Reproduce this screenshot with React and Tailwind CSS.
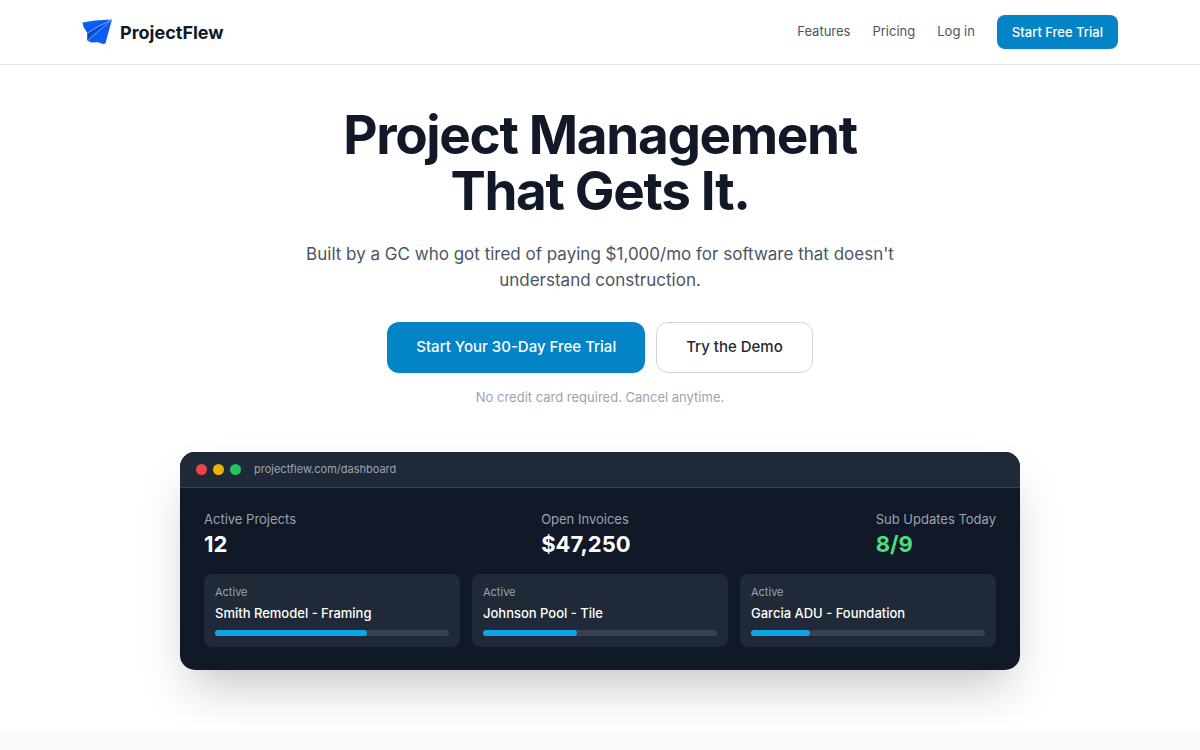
const projects = [
  { name: 'Smith Remodel - Framing', progress: 65 },
  { name: 'Johnson Pool - Tile', progress: 40 },
  { name: 'Garcia ADU - Foundation', progress: 25 },
];

const stats = [
  { label: 'Active Projects', value: '12', color: 'text-white' },
  { label: 'Open Invoices', value: '$47,250', color: 'text-white' },
  { label: 'Sub Updates Today', value: '8/9', color: 'text-[#4ade80]' },
];

function Logo() {
  return (
    <svg viewBox="0 0 30 26" className="h-[26px] w-[30px]" aria-hidden="true">
      <path d="M0.5 3.6 L13 1.4 L30 0.6 L23.4 24.4 L21 25 L16 23.2 L9 23.4 L5.4 21.6 L5.2 13.8 L1.6 8 Z" fill="#0a5cf5" />
      <path d="M29 1.4 L5.6 14.4 L5.4 21.4 L9.4 15.6 Z" fill="#0846c4" />
      <path d="M29.5 0.8 L15 8.2 L5.4 14.2" fill="none" stroke="#a3c3fb" strokeWidth="0.7" />
      <path d="M29.5 0.8 L12 16.2 L5.6 21.6" fill="none" stroke="#a3c3fb" strokeWidth="0.6" />
    </svg>
  );
}

function Header() {
  return (
    <header className="border-b border-gray-200">
      <div className="mx-auto flex h-16 max-w-[1080px] items-center justify-between px-[22px]">
        <a href="#" className="flex items-center gap-2 text-[18px] font-bold">
          <Logo />
          ProjectFlew
        </a>
        <nav className="flex items-center gap-[22px] text-[13px] text-[#4b5563]">
          <a href="#features">Features</a>
          <a href="#pricing">Pricing</a>
          <a href="#login">Log in</a>
          <a href="#trial" className="rounded-lg bg-[#0284c7] px-[15px] py-[7px] leading-5 font-medium text-white">
            Start Free Trial
          </a>
        </nav>
      </div>
    </header>
  );
}

function DashboardPreview() {
  return (
    <div className="mx-auto mt-[45px] max-w-[840px] overflow-hidden rounded-[15px] bg-[#111827] text-left shadow-2xl">
      <div className="flex h-9 items-center gap-[6px] border-b border-[#374151] bg-[#1f2937] px-4">
        <span className="size-[11px] rounded-full bg-[#ef4444]" />
        <span className="size-[11px] rounded-full bg-[#eab308]" />
        <span className="size-[11px] rounded-full bg-[#22c55e]" />
        <span className="ml-[7px] text-[11px] text-[#9ca3af]">projectflew.com/dashboard</span>
      </div>
      <div className="px-6 pt-[22px] pb-[23px]">
        <div className="flex justify-between">
          {stats.map((s) => (
            <div key={s.label}>
              <p className="text-[13px] leading-[19px] text-[#9ca3af]">{s.label}</p>
              <p className={`text-[22px] leading-[30px] font-bold ${s.color}`}>{s.value}</p>
            </div>
          ))}
        </div>
        <div className="mt-[15px] grid grid-cols-3 gap-3">
          {projects.map((p) => (
            <div key={p.name} className="rounded-lg bg-[#1f2937] p-[11px]">
              <p className="text-[11px] leading-[15px] text-[#9ca3af]">Active</p>
              <p className="mt-1 text-[13px] leading-[18px] font-medium text-white">{p.name}</p>
              <div className="mt-2 h-[6px] rounded-full bg-[#374151]">
                <div className="h-full rounded-full bg-[#0ea5e9]" style={{ width: `${p.progress}%` }} />
              </div>
            </div>
          ))}
        </div>
      </div>
    </div>
  );
}

export default function App() {
  return (
    <div className="flex min-h-screen flex-col bg-white font-['Inter',sans-serif] text-[#111827]">
      <Header />
      <main className="flex flex-1 flex-col">
        <section className="px-[22px] pt-[42px] pb-[60px] text-center">
          <h1 className="text-[53px] leading-14 font-bold tracking-tight">
            Project Management
            <br />
            That Gets It.
          </h1>
          <p className="mx-auto mt-[22px] max-w-[630px] text-[17px] leading-[26px] text-[#4b5563]">
            Built by a GC who got tired of paying $1,000/mo for software that doesn't understand construction.
          </p>
          <div className="mt-[29px] flex justify-center gap-[11px] text-[15px] font-medium">
            <a href="#trial" className="flex h-[51px] items-center rounded-xl bg-[#0284c7] px-[29px] text-white">
              Start Your 30-Day Free Trial
            </a>
            <a href="#demo" className="flex h-[51px] items-center rounded-xl border border-[#d1d5db] px-[29px] text-[#1f2937]">
              Try the Demo
            </a>
          </div>
          <p className="mt-[15px] text-[13px] leading-[19px] text-[#9ca3af]">No credit card required. Cancel anytime.</p>
          <DashboardPreview />
        </section>
        <section className="flex-1 bg-[#f9fafb]" />
      </main>
    </div>
  );
}
